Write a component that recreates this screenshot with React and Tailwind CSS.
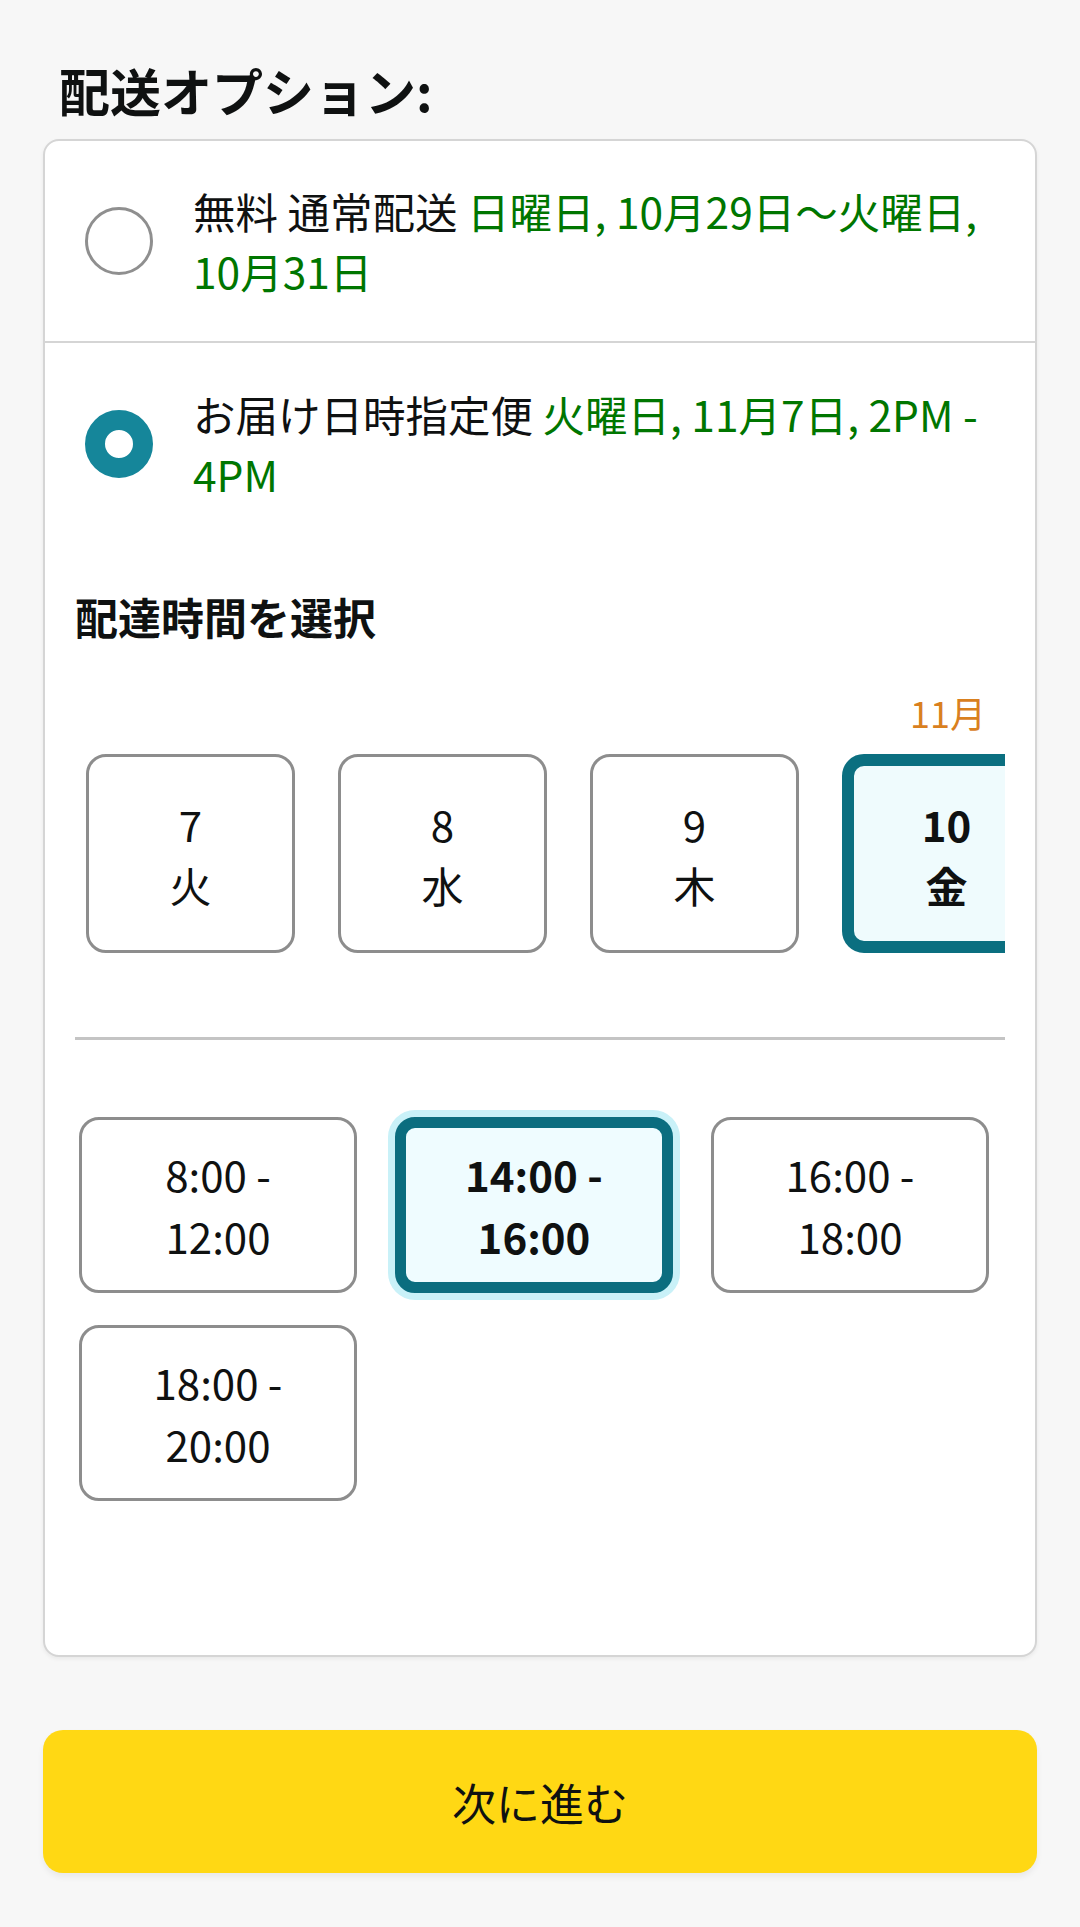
import React from 'react';

const dates = [
  { day: '7', week: '火' },
  { day: '8', week: '水' },
  { day: '9', week: '木' },
  { day: '10', week: '金', selected: true },
  { day: '11', week: '土' },
  { day: '12', week: '日' }
];

const slots = [
  { from: '8:00 -', to: '12:00' },
  { from: '14:00 -', to: '16:00', selected: true },
  { from: '16:00 -', to: '18:00' },
  { from: '18:00 -', to: '20:00' }
];

const Radio = ({ checked }) =>
  checked ? (
    <div className="w-[68px] h-[68px] shrink-0 rounded-full border-[20px] border-[#15869a] bg-white"></div>
  ) : (
    <div className="w-[68px] h-[68px] shrink-0 rounded-full border-[3px] border-[#8f8f8f] bg-white"></div>
  );

const App = () => {
  return (
    <div
      className="min-h-[1927px] w-full bg-[#f7f7f7] px-[43px] pt-[57px] text-[#0f1111]"
      style={{ fontFamily: '"Noto Sans CJK JP", "Noto Sans", sans-serif' }}
    >
      <h1 className="pl-[16px] text-[51px] leading-[66px] font-bold">配送オプション:</h1>

      <div className="mt-[16px] h-[1518px] rounded-[16px] border-2 border-[#d5d5d5] bg-white shadow-[0_2px_4px_rgba(0,0,0,0.06)]">
        {/* Standard delivery */}
        <div className="flex items-center gap-[40px] border-b-2 border-[#d5d5d5] pl-[40px] pr-[24px] py-[40px]">
          <Radio />
          <p className="text-[42.5px] leading-[60px]">
            無料 通常配送 <span className="text-[#007600]">日曜日, 10月29日〜火曜日, 10月31日</span>
          </p>
        </div>

        {/* Scheduled delivery */}
        <div className="pt-[41px]">
          <div className="flex items-center gap-[40px] pl-[40px] pr-[24px]">
            <Radio checked />
            <p className="text-[42.5px] leading-[60px]">
              お届け日時指定便 <span className="text-[#007600]">火曜日, 11月7日, 2PM - 4PM</span>
            </p>
          </div>

          <div className="px-[30px]">
            <h2 className="mt-[82px] text-[43px] leading-[60px] font-bold">配達時間を選択</h2>

            <div className="mt-[41px] pr-[19px] text-right text-[36px] leading-[50px] text-[#d9801f]">11月</div>

            <div className="mt-[17px] flex gap-[43px] overflow-hidden pl-[11px]">
              {dates.map((d, i) => (
                <div
                  key={i}
                  className={
                    d.selected
                      ? 'flex h-[199px] w-[209px] shrink-0 flex-col items-center justify-center rounded-[22px] border-[12px] border-[#0b6f80] bg-[#effbfd] font-bold'
                      : 'flex h-[199px] w-[209px] shrink-0 flex-col items-center justify-center rounded-[20px] border-[3px] border-[#8d8d8d] bg-white'
                  }
                >
                  <span className="text-[42px] leading-[61px]">{d.day}</span>
                  <span className="text-[42px] leading-[61px]">{d.week}</span>
                </div>
              ))}
            </div>

            <div className="mt-[84px] h-[3px] bg-[#c4c4c4]"></div>

            <div className="mt-[77px] grid grid-cols-[278px_278px_278px] gap-x-[38px] gap-y-[32px] pl-[4px]">
              {slots.map((s, i) => (
                <div
                  key={i}
                  className={
                    s.selected
                      ? 'flex h-[176px] flex-col items-center justify-center rounded-[20px] border-[11px] border-[#0b6d7f] bg-[#effcff] font-bold shadow-[0_0_0_7px_#c9f1f8]'
                      : 'flex h-[176px] flex-col items-center justify-center rounded-[20px] border-[3px] border-[#8d8d8d] bg-white'
                  }
                >
                  <span className="text-[42px] leading-[62px]">{s.from}</span>
                  <span className="text-[42px] leading-[62px]">{s.to}</span>
                </div>
              ))}
            </div>
          </div>
        </div>
      </div>

      <button className="mt-[73px] flex h-[143px] w-full items-center justify-center rounded-[20px] bg-[#ffd814] text-[44px] text-[#0f1111] shadow-[0_4px_6px_rgba(0,0,0,0.06)]">
        次に進む
      </button>
    </div>
  );
};

export default App;
